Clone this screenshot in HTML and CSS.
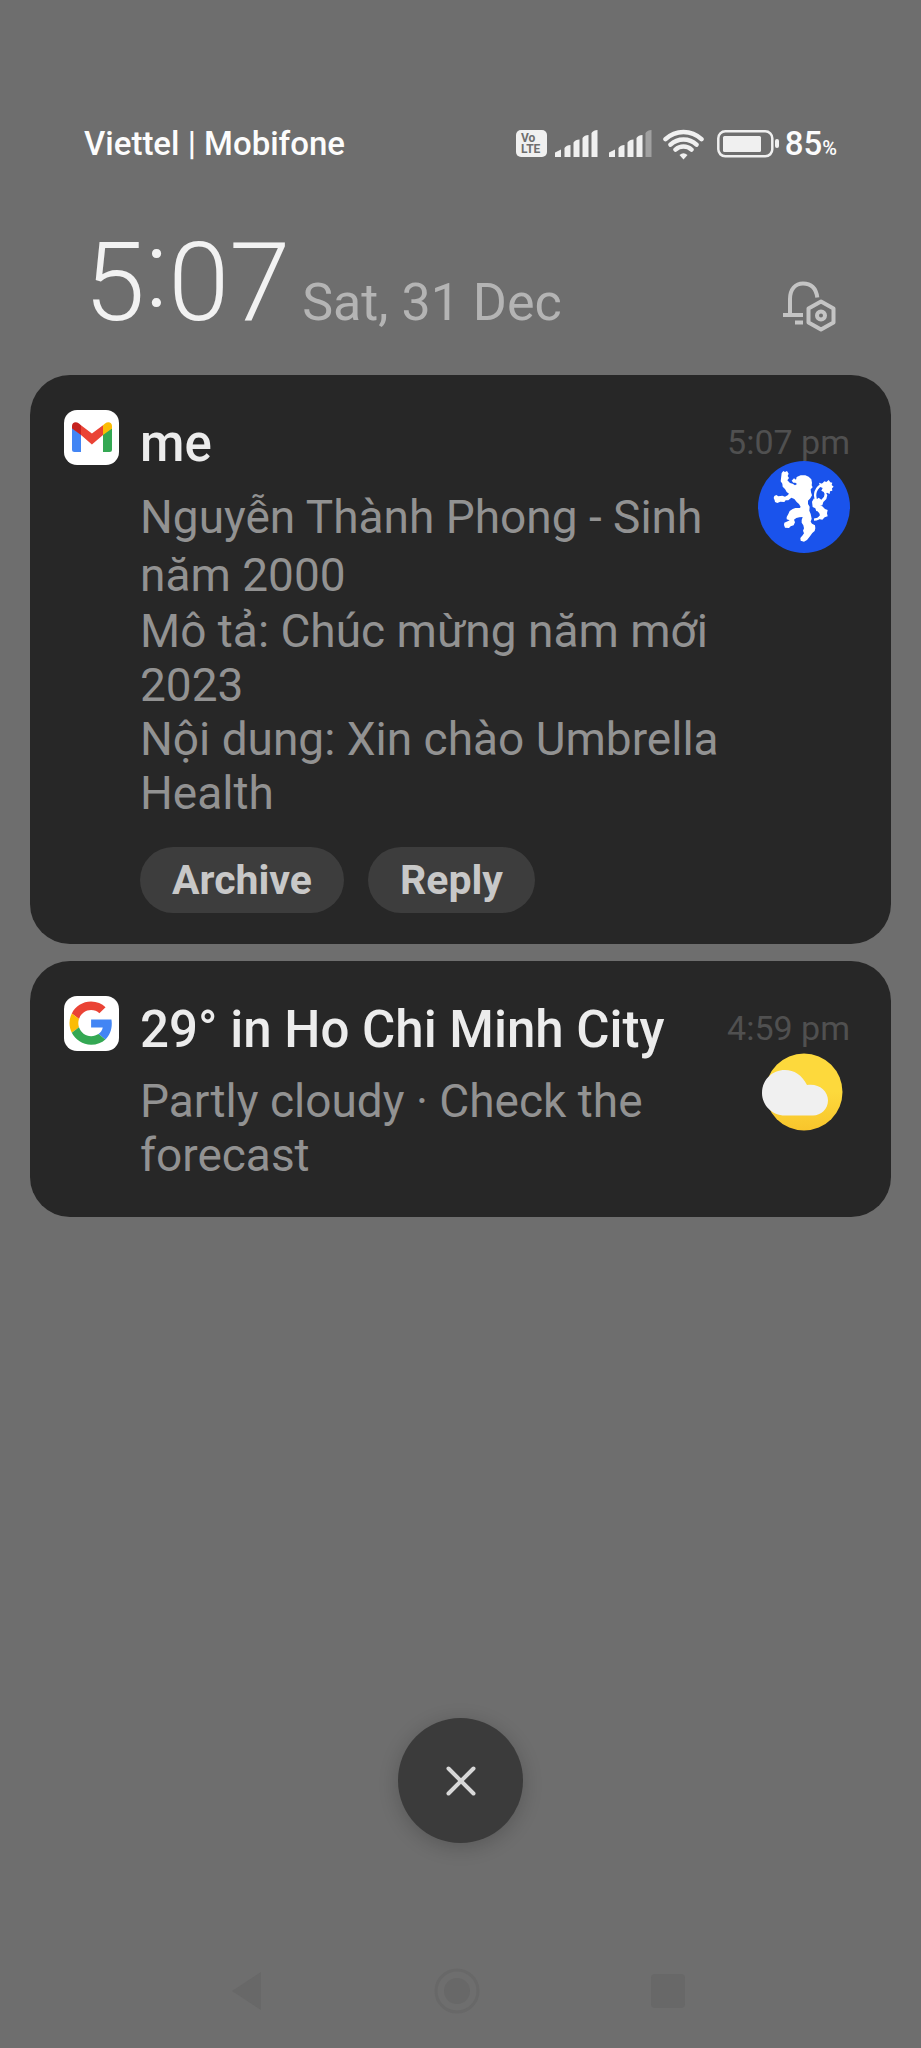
FILE: index.html
```html
<!DOCTYPE html>
<html lang="en">
<head>
<meta charset="utf-8">
<meta name="viewport" content="width=device-width, initial-scale=1">
<title>Notifications</title>
<link rel="stylesheet" href="styles.css">
</head>
<body class="shade">
<header class="top">
  <div class="status">
    <span class="carrier">Viettel | Mobifone</span>
    <div class="indicators">
      <svg class="volte" width="31" height="28" viewBox="0 0 31 28">
        <rect x="0" y="0" width="31" height="27" rx="5" fill="#f0f0f0"/>
        <text x="5" y="12" class="volte-text">Vo</text>
        <text x="5" y="23" class="volte-text">LTE</text>
      </svg>
      <svg class="signal" width="43" height="28" viewBox="0 0 43 28" fill="#f0f0f0">
        <path id="bars" d="M0 22.5l6-3V27H0zM9.500 18q2-3 6-3V27h-6zM18.500 12.500q2-3 6-3V27h-6zM27.500 8q2-3 6-3V27h-6z"/>
        <path d="M36.500 3q2-3 6-3V27h-6z"/>
      </svg>
      <svg class="signal" width="43" height="28" viewBox="0 0 43 28" fill="#f0f0f0">
        <use href="#bars"/>
        <path d="M36.500 3q2-3 6-3V27h-6z" fill="#a0a0a0"/>
      </svg>
      <svg class="wifi" width="42" height="31" viewBox="0 0 42 31" fill="none" stroke="#f0f0f0" stroke-width="4.500" stroke-linecap="round">
        <path d="M2.500 10.200A26 26 0 0 1 38.500 10.200M7.500 15.600A19 19 0 0 1 33.500 15.600M12.500 20.600A12 12 0 0 1 28.500 20.600"/>
        <path d="M16.500 26q4-3.500 8 0l-4 4.500z" fill="#f0f0f0" stroke="none"/>
      </svg>
      <svg class="battery" width="62" height="28" viewBox="0 0 62 28">
        <rect x="1.300" y="1.300" width="54" height="25" rx="7" fill="none" stroke="#f0f0f0" stroke-width="2.500"/>
        <rect x="6" y="6" width="38" height="16" rx="1.500" fill="#f0f0f0"/>
        <rect x="58" y="9" width="4" height="9" rx="2" fill="#f0f0f0"/>
      </svg>
      <span class="level">85<small class="percent">%</small></span>
    </div>
  </div>
  <div class="clock-row">
    <time class="clock">5<span class="colon">:</span>07</time>
    <span class="date">Sat, 31 Dec</span>
    <button class="settings" type="button" aria-label="Notification settings">
      <svg width="54" height="52" viewBox="0 0 54 52" fill="none" stroke="#c4c4c4" stroke-width="4">
        <path d="M0 34h20M7 34V18C7 8 12.500 2.500 20 2.500c7.500 0 13 4 14.300 14" />
        <path d="M12 41.500h8"/>
        <path d="M38 20.500l12.500 7v14L38 48.500l-12.500-7v-14z" stroke-linejoin="round"/>
        <circle cx="38" cy="34.500" r="4"/>
      </svg>
    </button>
  </div>
</header>

<main class="cards">
  <article class="card">
    <svg class="app" viewBox="0 0 55 55">
      <rect width="55" height="55" rx="13" fill="#fff"/>
      <path fill="#4285f4" d="M8 18l9 6v18h-6.500a2.500 2.500 0 0 1-2.500-2.500z"/>
      <path fill="#34a853" d="M39 24l9-6v21.500a2.500 2.500 0 0 1-2.500 2.500H39z"/>
      <path fill="#ea4335" d="M17 15.200l10.900 8.200L39 15.200V25l-11.100 9.500L17 25z"/>
      <path fill="#c5221f" d="M8 16c0-4 4-5 7-2.500l2 1.700V25l-9-6.500z"/>
      <path fill="#fbbc04" d="M48 16c0-4-4-5-7-2.500l-2 1.700V25l9-6.500z"/>
    </svg>
    <div class="main">
      <h2 class="title">me</h2>
      <div class="text">
        <p class="line tall">Nguyễn Thành Phong - Sinh năm 2000</p>
        <p class="line">Mô tả: Chúc mừng năm mới 2023</p>
        <p class="line">Nội dung: Xin chào Umbrella Health</p>
      </div>
      <div class="actions">
        <button class="action" type="button">Archive</button>
        <button class="action" type="button">Reply</button>
      </div>
    </div>
    <div class="side">
      <time class="when">5:07 pm</time>
      <svg class="picture" viewBox="54 62 276 276">
        <circle cx="192" cy="200" r="138" fill="#1a53ec"/>
        <path fill="#fff" d="M125 98l5-6 5 3 6-3 5 8-3 7 4 6-5 7 8 8 8 2 7 5 6-4-5-4-6 0-5-6 7-7 6 4 2-8 12-5 14 0 10 4 8 8 2 10-1 8 3 6-6 6 1 9 3 9-5 9-7 7 0 10 5 8-1 12 4 10 3 14-3 9 4 6 9 5 1 9-2 8-7 6-7 10-9 11-9 5-10-3-1-8 7-8 4-6-3-8 3-7-2-9-5-8 0-8 3-9-10 1-9 2-7 5 3 8-4 9-9 3-5 5-12-1-3-8 1-7 10-4 6-3-9-3 0-7 5-9 4-9 9-6 8-3 13 0 3-3-5-9-7-6-7-9-9-4-9 8-8 0-4 5-12-1-9 4-7-3-1-5-3-7 2-6 6-3 6 4 12-2 8 3 8-4 4-5-7-5-5-9-7-7-1-9-5-7z"/>
        <path fill="none" stroke="#fff" stroke-width="7" d="M222 238q14-1 20-10 4-10-8-18M232 186q-10-14-5-32 6-18 24-22"/>
        <path fill="#fff" d="M237 127l9 3 7-7 6 2 7-6 5 7 6 1-2 7 6 5-5 5 1 7-7 2-1 8-8-4-6 6-4-8-7-4 4-8-7-3zM216 184l6-10 5 5 9-7 8 6 8-9 3-15 7 10-3 12-9 9-3 10-9 3 3 8-12 7-3-9-8-4zM228 204l9-9 10 3 8 8 8 3-2 10 2 9-9 3-7 7-11-2-8 2 9-8 7-9-5-9z"/>
      </svg>
    </div>
  </article>

  <article class="card">
    <svg class="app" viewBox="0 0 55 55">
      <rect width="55" height="55" rx="13" fill="#fff"/>
      <g transform="translate(5.500 5.500) scale(.9)">
        <path fill="#ea4335" d="M24 9.500c3.540 0 6.710 1.220 9.210 3.600l6.850-6.850C35.900 2.380 30.470 0 24 0 14.620 0 6.510 5.380 2.560 13.220l7.980 6.190C12.430 13.720 17.740 9.500 24 9.500z"/>
        <path fill="#4285f4" d="M46.980 24.550c0-1.570-.15-3.090-.38-4.550H24v9.020h12.940c-.58 2.960-2.260 5.480-4.780 7.180l7.730 6c4.510-4.180 7.090-10.360 7.090-17.650z"/>
        <path fill="#fbbc05" d="M10.530 28.590c-.48-1.450-.76-2.990-.76-4.590s.27-3.140.76-4.590l-7.980-6.190C.92 16.460 0 20.120 0 24c0 3.880.92 7.540 2.560 10.780l7.970-6.190z"/>
        <path fill="#34a853" d="M24 48c6.480 0 11.930-2.130 15.890-5.810l-7.730-6c-2.150 1.450-4.920 2.300-8.160 2.300-6.260 0-11.570-4.220-13.470-9.910l-7.980 6.190C6.510 42.620 14.620 48 24 48z"/>
      </g>
    </svg>
    <div class="main">
      <h2 class="title">29° in Ho Chi Minh City</h2>
      <div class="text">
        <p class="line">Partly cloudy · Check the forecast</p>
      </div>
    </div>
    <div class="side">
      <time class="when">4:59 pm</time>
      <svg class="picture" viewBox="0 0 92 92">
        <defs>
          <linearGradient id="sun" x1="0" y1="0" x2="0" y2="1"><stop offset="0.500" stop-color="#fdd93c"/><stop offset="1" stop-color="#f8c52c"/></linearGradient>
        </defs>
        <circle cx="46" cy="45" r="38.500" fill="url(#sun)"/>
        <path fill="#f0f0f0" d="M27 68.500C14 68.500 4 58 4 46c0-13 10-23 23-23 9 0 17 5 22 15 11-2 21 5 21 15.500C70 62 63 68.500 55 68.500z"/>
      </svg>
    </div>
  </article>
</main>

<footer class="bottom">
  <button class="clear" type="button" aria-label="Clear all">
    <svg width="30" height="30" viewBox="0 0 30 30" fill="none" stroke="#d8d8d8" stroke-width="4" stroke-linecap="round"><path d="M2.500 2.500l25 25M27.500 2.500l-25 25"/></svg>
  </button>
  <nav class="nav">
    <button class="key" type="button" aria-label="Back"><svg width="46" height="46" viewBox="0 0 46 46"><path fill="#686868" d="M9 23L38 4v38z"/></svg></button>
    <button class="key" type="button" aria-label="Home"><svg width="46" height="46" viewBox="0 0 46 46"><circle cx="23" cy="23" r="21" fill="none" stroke="#686868" stroke-width="3"/><circle cx="23" cy="23" r="13" fill="#686868"/></svg></button>
    <button class="key" type="button" aria-label="Recent apps"><svg width="46" height="46" viewBox="0 0 46 46"><rect x="6" y="6" width="34" height="34" rx="4" fill="#686868"/></svg></button>
  </nav>
</footer>
</body>
</html>
```

FILE: styles.css
```css
* {
  box-sizing: border-box;
}

.shade {
  margin: 0;
  min-height: 100vh;
  display: flex;
  flex-direction: column;
  background: #6e6e6e;
  color: #ececec;
  font-family: Roboto, "Noto Sans", sans-serif;
}

button {
  border: 0;
  padding: 0;
  background: none;
  color: inherit;
  font: inherit;
}

svg {
  display: block;
  flex: none;
}

.top {
  padding: 124px 84px 42px;
}

.status {
  display: flex;
  justify-content: space-between;
  align-items: center;
  height: 40px;
  font-size: 33px;
  line-height: 40px;
  font-weight: 500;
  color: #fcfcfc;
}

.indicators {
  display: flex;
  align-items: center;
}

.volte {
  margin-right: 8px;
}

.volte-text {
  font-size: 12px;
  font-weight: 700;
  fill: #6e6e6e;
}

.signal {
  margin-right: 11px;
}

.wifi {
  margin-right: 12px;
}

.battery {
  margin-right: 6px;
}

.percent {
  font-size: 20px;
  line-height: 20px;
}

.clock-row {
  display: flex;
  align-items: baseline;
  margin-top: 69px;
}

.clock {
  font-size: 110px;
  line-height: 100px;
  font-weight: 300;
  color: #f2f2f2;
}

.colon {
  line-height: 0;
  vertical-align: 13px;
}

.date {
  margin-left: 12px;
  font-size: 52px;
  line-height: 60px;
  color: #b4b4b4;
}

.settings {
  margin-left: auto;
  align-self: flex-end;
}

.cards {
  display: flex;
  flex-direction: column;
  gap: 17px;
  padding: 0 30px;
}

.card {
  display: flex;
  align-items: flex-start;
  padding: 35px 41px 31px 34px;
  border-radius: 40px;
  background: #272727;
}

.app {
  width: 55px;
  height: 55px;
}

.main {
  flex: 1;
  min-width: 0;
  margin: 0 8px 0 21px;
}

.title {
  margin: 0;
  font-size: 51px;
  line-height: 68px;
  font-weight: 500;
}

.text {
  padding: 10px 0 4px;
}

.line {
  margin: 0;
  font-size: 46px;
  line-height: 54px;
  color: #929292;
}

.tall {
  line-height: 58px;
}

.actions {
  display: flex;
  gap: 24px;
  margin-top: 23px;
}

.action {
  height: 66px;
  padding: 0 32px;
  border-radius: 33px;
  background: #3d3d3d;
  color: #c8c8c8;
  font-size: 41px;
  font-weight: 700;
}

.side {
  display: flex;
  flex-direction: column;
  align-items: flex-end;
}

.when {
  padding-top: 14px;
  font-size: 34px;
  line-height: 37px;
  color: #505050;
}

.picture {
  width: 92px;
  height: 92px;
}

.bottom {
  display: flex;
  flex-direction: column;
  align-items: center;
  margin-top: auto;
}

.clear {
  display: grid;
  place-items: center;
  width: 125px;
  height: 125px;
  border-radius: 50%;
  background: #3b3b3b;
  box-shadow: 0 4px 20px rgba(0, 0, 0, 0.2);
}

.nav {
  display: flex;
  justify-content: space-between;
  align-self: stretch;
  margin-top: 91px;
  padding: 34px 230px 34px 223px;
}
```
